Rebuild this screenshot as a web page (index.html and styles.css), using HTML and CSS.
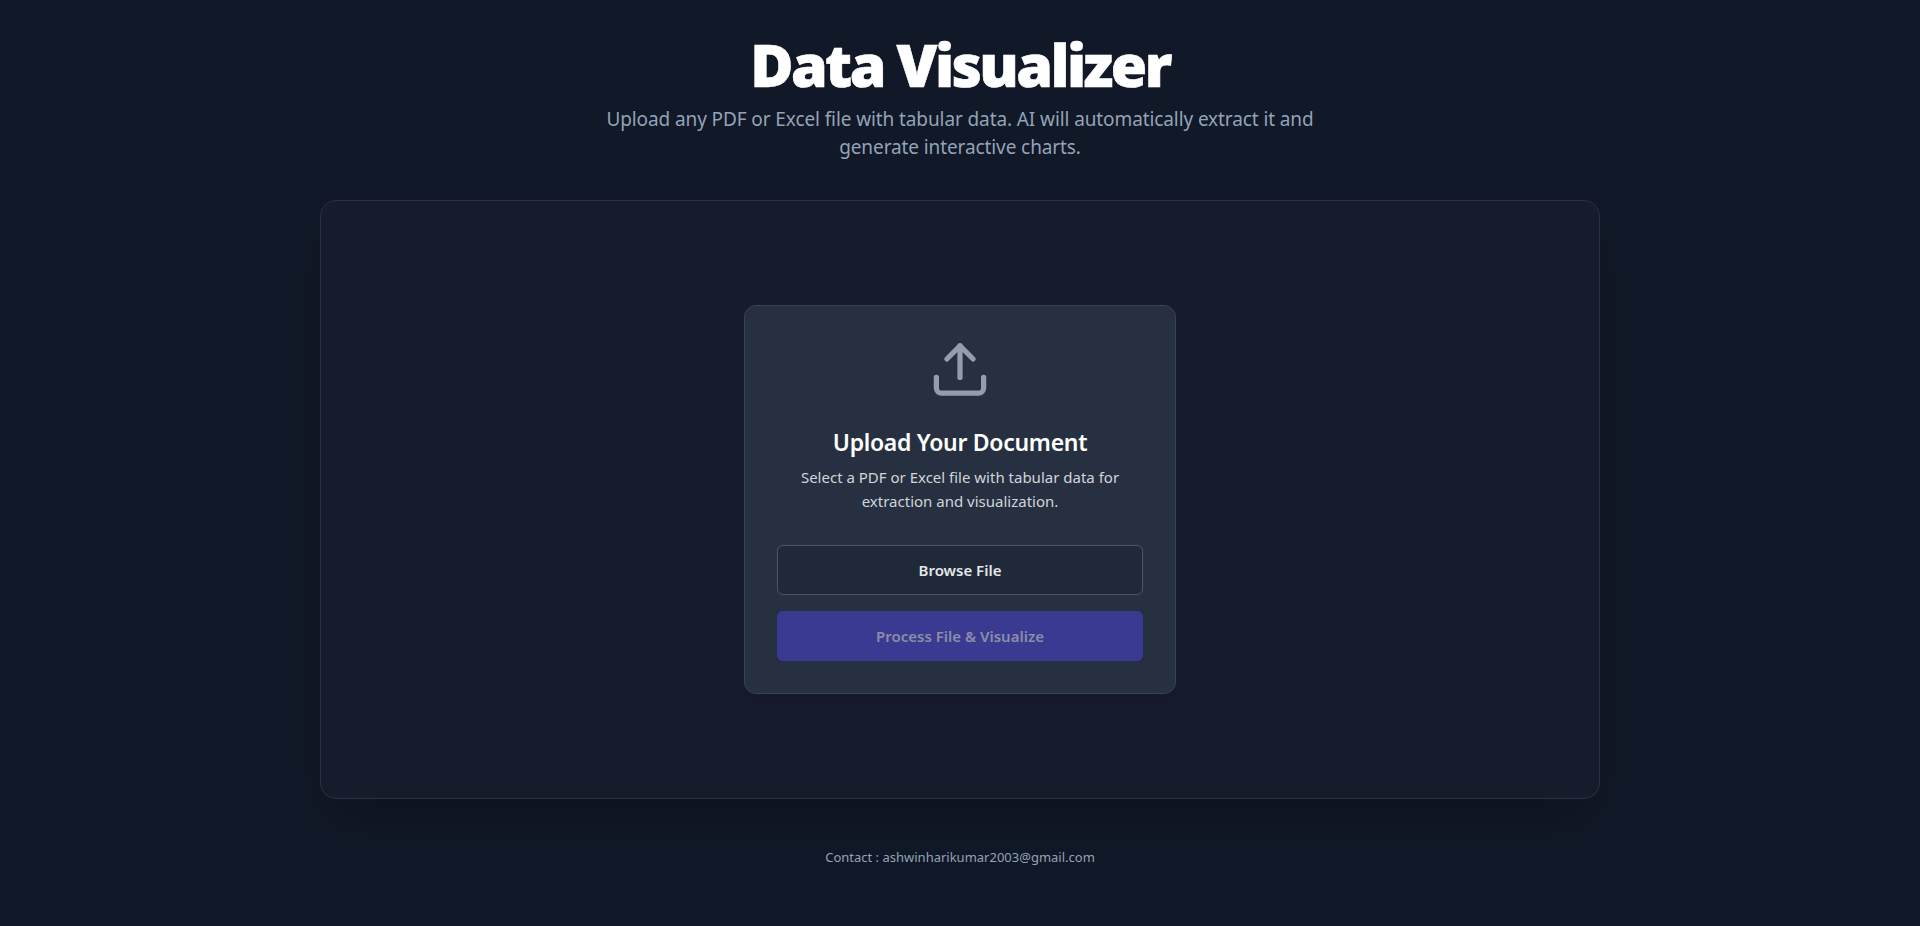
FILE: index.html
```html
<!DOCTYPE html>
<html lang="en">

<head>
  <meta charset="UTF-8" />
  <meta name="viewport" content="width=device-width, initial-scale=1.0" />
  <title>Data Visualizer</title>
  <link rel="stylesheet" href="styles.css">
</head>

<body>
  <header class="header">
    <h1>Data Visualizer</h1>
    <p>Upload any PDF or Excel file with tabular data. AI will automatically extract it and generate interactive charts.</p>
  </header>

  <main class="panel">
    <div class="upload-card">
      <svg class="upload-icon" viewBox="0 0 24 24" fill="none" stroke="currentColor" stroke-width="2"
        stroke-linecap="round" stroke-linejoin="round">
        <path d="M21 15v4a2 2 0 0 1-2 2H5a2 2 0 0 1-2-2v-4" />
        <polyline points="17 8 12 3 7 8" />
        <line x1="12" y1="3" x2="12" y2="15" />
      </svg>
      <h2>Upload Your Document</h2>
      <p>Select a PDF or Excel file with tabular data for extraction and visualization.</p>
      <div class="button-group">
        <button class="btn-browse">Browse File</button>
        <button class="btn-process" disabled>Process File &amp; Visualize</button>
      </div>
    </div>
  </main>

  <footer class="footer">Contact : ashwinharikumar2003@gmail.com</footer>
</body>

</html>
```

FILE: styles.css
```css
:root {
  --bg: #111827;
  --panel: #161c2c;
  --card: #273040;
  --muted: #94a3b8;
}

* {
  box-sizing: border-box;
}

html {
  background: var(--bg);
}

body {
  margin: 0;
  padding: 32px 0 0;
  font-family: "Noto Sans", "Open Sans", sans-serif;
  color: #fff;
}

.header {
  text-align: center;
  margin-bottom: 39px;
}

.header h1 {
  margin: 0;
  font-size: 59px;
  line-height: 64px;
  font-weight: 900;
  letter-spacing: -2.6px;
  -webkit-text-stroke: 0.6px #fff;
}

.header p {
  width: 760px;
  margin: 9px auto 0;
  font-size: 19px;
  line-height: 28px;
  letter-spacing: -0.1px;
  color: var(--muted);
}

.panel {
  display: flex;
  align-items: center;
  justify-content: center;
  width: 1280px;
  height: 599px;
  margin: 0 auto;
  background: var(--panel);
  border: 1px solid #293241;
  border-radius: 16px;
  box-shadow: 0 25px 50px -12px rgba(0, 0, 0, 0.25);
}

.upload-card {
  display: flex;
  flex-direction: column;
  align-items: center;
  width: 432px;
  height: 389px;
  padding: 32px;
  background: var(--card);
  border: 1px solid #384252;
  border-radius: 12px;
  box-shadow: 0 10px 15px -3px rgba(0, 0, 0, 0.1);
}

.upload-icon {
  width: 64px;
  height: 64px;
  color: #959caa;
}

.upload-card h2 {
  margin: 25px 0 7px;
  font-size: 23px;
  line-height: 32px;
  font-weight: 600;
  letter-spacing: -0.3px;
  color: #fff;
}

.upload-card p {
  margin: 0;
  font-size: 15px;
  line-height: 24px;
  text-align: center;
  color: #d1d5db;
}

.button-group {
  display: flex;
  flex-direction: column;
  gap: 16px;
  width: 100%;
  margin-top: 32px;
}

.button-group button {
  width: 100%;
  height: 50px;
  border-radius: 6px;
  font-family: inherit;
  font-size: 15px;
  font-weight: 600;
}

.btn-browse {
  background: #1f2937;
  border: 1px solid #4b5563;
  color: #e5e7eb;
}

.btn-process {
  background: #3b3a92;
  border: none;
  color: #8b8da8;
}

.footer {
  margin-top: 48px;
  padding-bottom: 58px;
  text-align: center;
  font-size: 13px;
  line-height: 20px;
  color: var(--muted);
}
```
